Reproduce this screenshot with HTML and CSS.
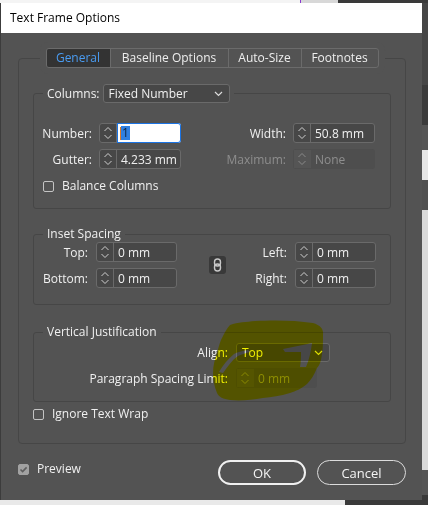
FILE: index.html
```html
<!DOCTYPE html>
<html>
<head>
<meta charset="utf-8">
<link rel="stylesheet" href="styles.css">
</head>
<body>
<div class="desktop">
  <div class="dialog">
    <div class="titlebar">Text Frame Options</div>
    <div class="content">
      <div class="tabs-wrap">
        <div class="tabs">
          <div class="tab active t-general">General</div>
          <div class="tab t-baseline">Baseline Options</div>
          <div class="tab t-auto">Auto-Size</div>
          <div class="tab t-foot">Footnotes</div>
        </div>
      </div>
      <div class="panel">
        <fieldset class="group">
          <legend class="legend-row">
            <span>Columns:</span>
            <div class="select sel-cols"><span>Fixed Number</span>
              <svg class="chev" width="9" height="6" viewBox="0 0 9 6"><path d="M1 1 L4.5 4.5 L8 1" fill="none" stroke="#dcdcdc" stroke-width="1.2"/></svg>
            </div>
          </legend>
          <div class="grid cols-grid">
            <div class="lbl">Number:</div>
            <div class="field">
              <div class="spin"><svg width="10" height="16" viewBox="0 0 10 16"><path d="M1.5 6 L5 2.5 L8.5 6 M1.5 10 L5 13.5 L8.5 10" fill="none" stroke="#cfcfcf" stroke-width="1"/></svg></div>
              <div class="input focus"><span class="caret"></span><span class="sel">1</span></div>
            </div>
            <div class="lbl">Width:</div>
            <div class="field">
              <div class="spin"><svg width="10" height="16" viewBox="0 0 10 16"><path d="M1.5 6 L5 2.5 L8.5 6 M1.5 10 L5 13.5 L8.5 10" fill="none" stroke="#cfcfcf" stroke-width="1"/></svg></div>
              <div class="input">50.8 mm</div>
            </div>
            <div class="lbl">Gutter:</div>
            <div class="field">
              <div class="spin"><svg width="10" height="16" viewBox="0 0 10 16"><path d="M1.5 6 L5 2.5 L8.5 6 M1.5 10 L5 13.5 L8.5 10" fill="none" stroke="#cfcfcf" stroke-width="1"/></svg></div>
              <div class="input">4.233 mm</div>
            </div>
            <div class="lbl dis">Maximum:</div>
            <div class="field disabled">
              <div class="spin"><svg width="10" height="16" viewBox="0 0 10 16"><path d="M1.5 6 L5 2.5 L8.5 6 M1.5 10 L5 13.5 L8.5 10" fill="none" stroke="#8a8a8a" stroke-width="1"/></svg></div>
              <div class="input">None</div>
            </div>
          </div>
          <label class="check balance"><span class="box"></span><span>Balance Columns</span></label>
        </fieldset>

        <fieldset class="group inset">
          <legend>Inset Spacing</legend>
          <div class="grid inset-grid">
            <div class="lbl">Top:</div>
            <div class="field">
              <div class="spin"><svg width="10" height="16" viewBox="0 0 10 16"><path d="M1.5 6 L5 2.5 L8.5 6 M1.5 10 L5 13.5 L8.5 10" fill="none" stroke="#cfcfcf" stroke-width="1"/></svg></div>
              <div class="input">0 mm</div>
            </div>
            <div class="gap-col"></div>
            <div class="link">
              <svg width="9" height="14" viewBox="0 0 9 14"><rect x="1.5" y="1" width="6" height="7" rx="3" fill="none" stroke="#c8c8c8" stroke-width="1.4"/><rect x="1.5" y="6" width="6" height="7" rx="3" fill="none" stroke="#c8c8c8" stroke-width="1.4"/></svg>
            </div>
            <div class="lbl">Left:</div>
            <div class="field">
              <div class="spin"><svg width="10" height="16" viewBox="0 0 10 16"><path d="M1.5 6 L5 2.5 L8.5 6 M1.5 10 L5 13.5 L8.5 10" fill="none" stroke="#cfcfcf" stroke-width="1"/></svg></div>
              <div class="input">0 mm</div>
            </div>
            <div class="lbl">Bottom:</div>
            <div class="field">
              <div class="spin"><svg width="10" height="16" viewBox="0 0 10 16"><path d="M1.5 6 L5 2.5 L8.5 6 M1.5 10 L5 13.5 L8.5 10" fill="none" stroke="#cfcfcf" stroke-width="1"/></svg></div>
              <div class="input">0 mm</div>
            </div>
            <div class="gap-col"></div>
            <div class="lbl">Right:</div>
            <div class="field">
              <div class="spin"><svg width="10" height="16" viewBox="0 0 10 16"><path d="M1.5 6 L5 2.5 L8.5 6 M1.5 10 L5 13.5 L8.5 10" fill="none" stroke="#cfcfcf" stroke-width="1"/></svg></div>
              <div class="input">0 mm</div>
            </div>
          </div>
        </fieldset>

        <fieldset class="group vj">
          <legend>Vertical Justification</legend>
          <div class="grid vj-grid">
            <div class="lbl">Align:</div>
            <div class="select sel-align"><span>Top</span>
              <svg class="chev" width="9" height="6" viewBox="0 0 9 6"><path d="M1 1 L4.5 4.5 L8 1" fill="none" stroke="#dcdcdc" stroke-width="1.2"/></svg>
            </div>
            <div class="lbl">Paragraph Spacing Limit:</div>
            <div class="field disabled limit">
              <div class="spin"><svg width="10" height="16" viewBox="0 0 10 16"><path d="M1.5 6 L5 2.5 L8.5 6 M1.5 10 L5 13.5 L8.5 10" fill="none" stroke="#8a8a8a" stroke-width="1"/></svg></div>
              <div class="input">0 mm</div>
            </div>
          </div>
        </fieldset>

        <label class="check wrap"><span class="box"></span><span>Ignore Text Wrap</span></label>
      </div>

      <div class="footer">
        <label class="check"><span class="box checked"><svg width="11" height="11" viewBox="0 0 11 11"><path d="M2.5 5.5 L4.6 7.6 L8.6 3.4" fill="none" stroke="#5e5e5e" stroke-width="1.6"/></svg></span><span>Preview</span></label>
        <div class="btn ok">OK</div>
        <div class="btn cancel">Cancel</div>
      </div>
    </div>
  </div>
  <svg class="marker" width="118" height="84" viewBox="0 0 118 84">
    <path fill="#ffff00" fill-rule="evenodd" d="M20 7 C28 4 36 4 45 3 C62 2 85 2 103 5 C110 7 114 11 113 17 C113 25 113 30 112 36 C111 43 110 47 107 50 C104 57 101 62 97 66 C91 71 86 73 80 75 C70 78 62 79 53 80 C42 82 30 83 20 82 C13 81 9 79 7 75 C4 68 3 61 3 55 C3 47 5 41 7 35 C9 28 10 23 13 18 C15 14 17 10 20 7 Z M9 54 L13 55 C18 48 22 42 28 38 C32 36 36 35 40 34 L38 32 C32 33 27 34 24 36 C18 41 13 47 9 54 Z M73 31 C83 29 93 27 102 25 C101 33 99 42 96 49 L90 49 C91 44 91 39 91 34 C86 34 80 34 75 34 Z"/>
  </svg>
</div>
</body>
</html>
```

FILE: styles.css
```css
* { box-sizing: border-box; }

body {
  margin: 0;
  font-family: "Open Sans", "Noto Sans", sans-serif;
  font-size: 12px;
  color: #f0f0f0;
}

.desktop {
  position: relative;
  isolation: isolate;
  width: 428px;
  height: 505px;
  overflow: hidden;
  background:
    linear-gradient(to right, #f4f4f4 0 300px, #8a3ad0 300px 301px, #d8d8d8 301px 338px, #3a3a3a 338px) left top / 100% 3px no-repeat,
    linear-gradient(to bottom, #f4f4f4 0 3px, #464646 3px 85px, #3b3b3b 85px 125px, #555555 125px 150px, #e6e6e6 150px 180px, #505050 180px 210px, #dadada 210px 470px, #555555 470px 495px, #3a3a3a 495px) right top / 6px 100% no-repeat,
    linear-gradient(to right, #e9e9e9 0 345px, #3a3a3a 345px);
}

.dialog {
  position: absolute;
  left: 0;
  top: 3px;
  width: 422px;
  height: 497px;
  background: #535353;
  border-left: 1px solid #3c3c3c;
}

.titlebar {
  height: 30px;
  background: #ffffff;
  color: #000;
  font-family: "Segoe UI", "Open Sans", sans-serif;
  font-size: 12px;
  line-height: 30px;
  padding-left: 9px;
}

.content {
  padding: 15px 16px 0 17px;
}

.tabs-wrap {
  display: flex;
  justify-content: center;
  position: relative;
  z-index: 1;
}

.tabs {
  display: flex;
  border: 1px solid #6b6b6b;
  border-radius: 3px;
  background: #535353;
  box-shadow: 0 0 0 6px #535353;
  overflow: hidden;
}

.tab {
  height: 18px;
  line-height: 18px;
  text-align: center;
  border-left: 1px solid #6b6b6b;
  color: #eeeeee;
  white-space: nowrap;
}

.tab:first-child { border-left: none; }

.t-general { width: 63px; }
.t-baseline { width: 118px; }
.t-auto { width: 73px; }
.t-foot { width: 77px; }

.tab.active {
  background: #333333;
  color: #4a9cf2;
}

.panel {
  margin-top: -10px;
  border: 1px solid #464646;
  border-radius: 4px;
  padding: 25px 14px 21px 14px;
}

.group {
  border: 1px solid #464646;
  border-radius: 3px;
  margin: 0;
  padding: 0;
  min-width: 0;
}

.group legend {
  margin-left: 9px;
  padding: 0 4px;
  line-height: 16px;
}

.legend-row {
  display: flex;
  align-items: center;
  gap: 3px;
}

.select {
  height: 19px;
  border: 1px solid #6a6a6a;
  border-radius: 3px;
  background: #474747;
  display: flex;
  align-items: center;
  justify-content: space-between;
  padding: 0 6px 0 5px;
}

.sel-cols { width: 127px; }
.sel-align { width: 94px; }

.grid {
  display: grid;
  align-items: center;
}

.lbl { text-align: right; white-space: nowrap; }
.lbl.dis { color: #8e8e8e; }

.cols-grid {
  grid-template-columns: 58px 82px 1fr 82px;
  column-gap: 7px;
  row-gap: 6px;
  padding: 20px 15px 0 0;
}

.field {
  display: flex;
  height: 20px;
  border: 1px solid #6a6a6a;
  border-radius: 3px;
  background: #474747;
}

.spin {
  width: 17px;
  flex: none;
  border-right: 1px solid #6a6a6a;
  display: flex;
  align-items: center;
  justify-content: center;
}

.input {
  flex: 1;
  display: flex;
  align-items: center;
  padding-left: 4px;
  white-space: nowrap;
}

.input.focus {
  background: #ffffff;
  box-shadow: inset 0 0 0 1px #1b74e4;
  margin: -1px -1px -1px 0;
  border-radius: 0 3px 3px 0;
  padding-left: 3px;
}

.caret {
  width: 1px;
  height: 13px;
  background: #e07a20;
}

.sel {
  background: #2f7fe0;
  color: #10233d;
  line-height: 14px;
  padding: 0 1px;
}

.field.disabled {
  border-color: transparent;
  background: #4e4e4e;
  color: #8e8e8e;
}

.field.disabled .spin {
  border-right-color: transparent;
  background: #555555;
}

.check {
  display: flex;
  align-items: center;
  gap: 8px;
  line-height: 16px;
}

.box {
  width: 11px;
  height: 11px;
  border: 1px solid #c4c4c4;
  border-radius: 2px;
  flex: none;
}

.box.checked {
  background: #a2a2a2;
  border-color: #a2a2a2;
  position: relative;
}

.box.checked svg {
  position: absolute;
  left: -1px;
  top: -1px;
}

.balance {
  margin: 9px 0 14px 9px;
}

.inset { margin-top: 17px; }

.inset-grid {
  grid-template-columns: 54px 81px 16px 17px 53px 81px;
  column-gap: 8px;
  row-gap: 6px;
  padding: 0 15px 16px 0;
}

.gap-col { height: 20px; }

.link {
  grid-column: 4;
  grid-row: 1 / span 2;
  width: 17px;
  height: 18px;
  border-radius: 3px;
  background: #393939;
  display: flex;
  align-items: center;
  justify-content: center;
  align-self: center;
}

.vj { margin-top: 19px; }

.vj-grid {
  grid-template-columns: 1fr 94px;
  column-gap: 8px;
  row-gap: 6px;
  padding: 3px 60px 13px 0;
}

.limit { width: 81px; }

.wrap { margin-top: 4px; }

.footer {
  display: flex;
  align-items: center;
  margin-top: 16px;
}

.footer .check { margin-top: -7px; }

.btn {
  height: 25px;
  border-radius: 13px;
  display: flex;
  align-items: center;
  justify-content: center;
  font-size: 13px;
  color: #f4f4f4;
}

.ok {
  margin-left: auto;
  width: 88px;
  border: 2px solid #f0f0f0;
}

.cancel {
  margin-left: 11px;
  width: 89px;
  border: 1px solid #dcdcdc;
}

.marker {
  position: absolute;
  left: 210px;
  top: 318px;
  mix-blend-mode: multiply;
  pointer-events: none;
}
```
